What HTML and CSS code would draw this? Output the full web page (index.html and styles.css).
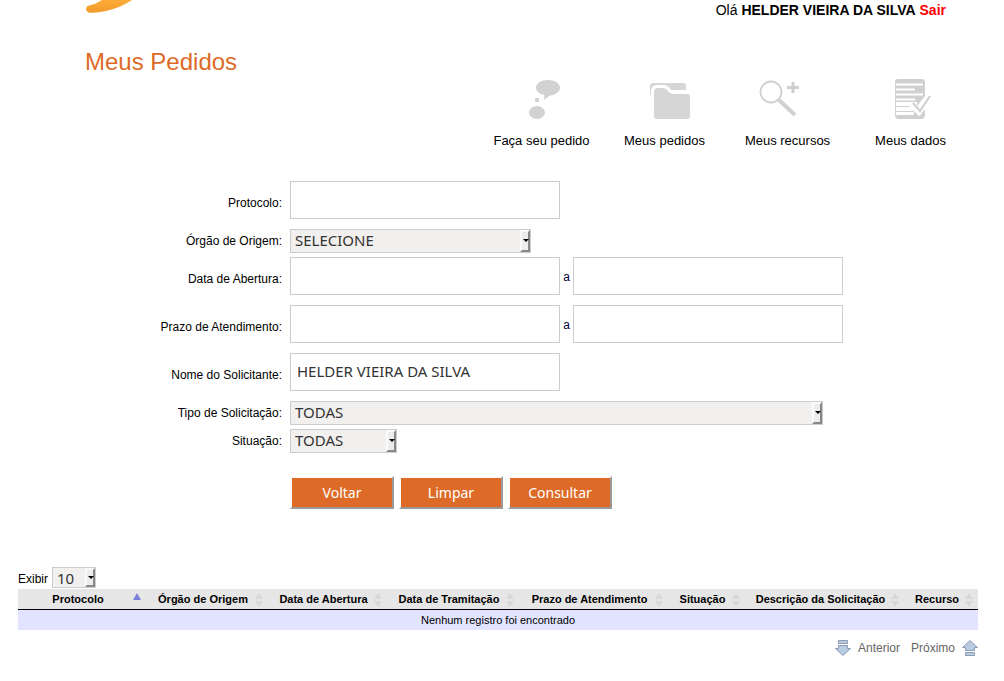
FILE: index.html
```html
<!DOCTYPE html>
<html lang="pt-BR">
<head>
    <meta charset="UTF-8">
    <meta name="viewport" content="width=device-width, initial-scale=1.0">
    <title>Meus Pedidos</title>
    <link rel="stylesheet" href="styles.css">
</head>
<body>
    <header class="topo">
        <svg class="logo" width="48" height="14" viewBox="0 0 48 14" aria-hidden="true">
            <defs>
                <linearGradient id="laranja" x1="0" y1="0" x2="0" y2="1">
                    <stop offset="0" stop-color="#fbab38"/>
                    <stop offset="1" stop-color="#f39a2b"/>
                </linearGradient>
            </defs>
            <path d="M17 0C12 3 8 5 4 5.500C0 6 0 12.500 5 12.700C19 13 35 8 47 0Z" fill="url(#laranja)"/>
        </svg>
        <div class="usuario">Olá <strong>HELDER VIEIRA DA SILVA</strong> <a href="#">Sair</a></div>
    </header>

    <h1>Meus Pedidos</h1>

    <nav class="menu">
        <a href="#">
            <svg width="44" height="44" viewBox="0 0 44 44" fill="#d2d2d2">
                <path d="M28 4C35 4 40 7 40 12C40 16 35 19 30 19.500L24 24L24.500 19C19 18 16 15 16 12C16 7 21 4 28 4Z"/>
                <rect x="15" y="22" width="4" height="4" rx="1"/>
                <ellipse cx="17" cy="36.500" rx="8" ry="6.500"/>
            </svg>
            <span>Faça seu pedido</span>
        </a>
        <a href="#">
            <svg width="44" height="44" viewBox="0 0 44 44" fill="#d6d6d6">
                <path d="M7 10Q7 7 10 7H40Q43 7 43 10V14H28Q25 9 21 9H14Q9 9 8 14V18L7 20Z"/>
                <path d="M11 16Q11 12 15 12H20Q23 12 25 15Q27 18 30 18H44Q47 18 47 21V40Q47 43 44 43H14Q11 43 11 40Z"/>
            </svg>
            <span>Meus pedidos</span>
        </a>
        <a href="#">
            <svg width="44" height="44" viewBox="0 0 44 44" fill="none" stroke="#d0d0d0">
                <circle cx="5" cy="16" r="10.500" stroke-width="1.800"/>
                <path d="M13 24L29 39" stroke-width="4"/>
                <path d="M27 6V17M21 11.500H33" stroke-width="3"/>
            </svg>
            <span>Meus recursos</span>
        </a>
        <a href="#">
            <svg width="44" height="44" viewBox="0 0 44 44">
                <path d="M8 3H34L36 5V20L28 30L36 34V40L34 43H8L6 40V5Z" fill="#d0d0d0"/>
                <path d="M7 8.500H34M7 13.500H26M7 18.500H34M7 23.500H26" stroke="#fff" stroke-width="2"/>
                <path d="M7 26H28V30H7ZM7 31H24V35H7ZM7 36H25V39H7Z" fill="#fff"/>
                <path d="M22 28L30 36L42 20" fill="none" stroke="#fff" stroke-width="6"/>
                <path d="M24 27L31 35L41 20" fill="none" stroke="#cfcfcf" stroke-width="2"/>
            </svg>
            <span>Meus dados</span>
        </a>
    </nav>

    <main>
        <form class="filtro">
            <div class="linha linha-texto">
                <label for="protocolo">Protocolo:</label>
                <input type="text" id="protocolo" name="protocolo">
            </div>
            <div class="linha">
                <label for="orgao">Órgão de Origem:</label>
                <span class="combo combo-medio">
                    <select id="orgao" name="orgao"><option>SELECIONE</option></select>
                </span>
            </div>
            <div class="linha linha-texto">
                <label for="aberturaDe">Data de Abertura:</label>
                <input type="text" id="aberturaDe" name="aberturaDe">
                <label class="ate" for="aberturaAte">a</label>
                <input type="text" id="aberturaAte" name="aberturaAte">
            </div>
            <div class="linha linha-texto">
                <label for="prazoDe">Prazo de Atendimento:</label>
                <input type="text" id="prazoDe" name="prazoDe">
                <label class="ate" for="prazoAte">a</label>
                <input type="text" id="prazoAte" name="prazoAte">
            </div>
            <div class="linha linha-texto">
                <label for="solicitante">Nome do Solicitante:</label>
                <input type="text" id="solicitante" name="solicitante" value="HELDER VIEIRA DA SILVA">
            </div>
            <div class="linha">
                <label for="tipo">Tipo de Solicitação:</label>
                <span class="combo combo-grande">
                    <select id="tipo" name="tipo"><option>TODAS</option></select>
                </span>
            </div>
            <div class="linha">
                <label for="situacao">Situação:</label>
                <span class="combo combo-pequeno">
                    <select id="situacao" name="situacao"><option>TODAS</option></select>
                </span>
            </div>
            <div class="botoes">
                <button type="button">Voltar</button>
                <button type="reset">Limpar</button>
                <button type="button">Consultar</button>
            </div>
        </form>

        <section class="resultado">
            <div class="exibir">
                <label for="exibir">Exibir</label>
                <span class="combo">
                    <select id="exibir" name="exibir"><option>10</option><option>25</option><option>50</option></select>
                </span>
            </div>

            <table>
                <colgroup>
                    <col class="col-protocolo">
                    <col class="col-orgao">
                    <col class="col-abertura">
                    <col class="col-tramitacao">
                    <col class="col-prazo">
                    <col class="col-situacao">
                    <col class="col-descricao">
                    <col class="col-recurso">
                </colgroup>
                <thead>
                    <tr>
                        <th class="crescente">Protocolo</th>
                        <th>Órgão de Origem</th>
                        <th>Data de Abertura</th>
                        <th>Data de Tramitação</th>
                        <th>Prazo de Atendimento</th>
                        <th>Situação</th>
                        <th>Descrição da Solicitação</th>
                        <th>Recurso</th>
                    </tr>
                </thead>
                <tbody>
                    <tr>
                        <td colspan="8">Nenhum registro foi encontrado</td>
                    </tr>
                </tbody>
            </table>

            <div class="paginacao">
                <a href="#">
                    <svg width="16" height="16" viewBox="0 0 16 16" fill="#b9cbe0" stroke="#8c9cb4">
                        <path d="M3.500 0.500H12.500V3.500H3.500Z"/>
                        <path d="M3.500 5.500H12.500V8.500H15.500L8 15.500L0.500 8.500H3.500Z"/>
                    </svg>
                    Anterior
                </a>
                <a href="#">
                    Próximo
                    <svg width="16" height="16" viewBox="0 0 16 16" fill="#b9cbe0" stroke="#8c9cb4">
                        <path d="M8 0.500L15.500 7.500H12.500V10.500H3.500V7.500H0.500Z"/>
                        <path d="M3.500 12.500H12.500V15.500H3.500Z"/>
                    </svg>
                </a>
            </div>
        </section>
    </main>
</body>
</html>
```

FILE: styles.css
```css
* {
    box-sizing: border-box;
}
body {
    margin: 0;
    padding: 0 26px 24px 18px;
    font-family: "Liberation Sans", Arial, sans-serif;
    font-size: 12px;
    color: #000;
    background: #fff;
}
a {
    color: inherit;
    text-decoration: none;
}
.topo {
    display: flex;
    justify-content: space-between;
    align-items: flex-start;
    padding: 0 32px 0 67px;
}
.logo {
    display: block;
}
.usuario {
    font-size: 14px;
    line-height: 20px;
}
.usuario a {
    color: #f00;
    font-weight: bold;
}
h1 {
    margin: 28px 0 0 67px;
    font-size: 24px;
    font-weight: normal;
    line-height: 28px;
    color: #dd6b27;
}

/* menu de ícones */
.menu {
    display: flex;
    justify-content: flex-end;
    padding-right: 6px;
}
.menu a {
    display: flex;
    flex-direction: column;
    align-items: center;
    width: 123px;
    font-size: 13px;
}
.menu svg {
    overflow: visible;
}
.menu span {
    margin-top: 12px;
    line-height: 17px;
}

/* formulário */
.filtro {
    margin-top: 32px;
}
.linha {
    display: flex;
    align-items: center;
    margin-bottom: 4px;
}
.linha-texto {
    margin-bottom: 10px;
}
.linha label:first-child {
    width: 264px;
    margin-right: 8px;
    text-align: right;
}
.linha-texto label:first-child {
    padding-top: 6px;
}
.linha .ate {
    width: 13px;
    padding-top: 2px;
    text-align: center;
    color: #003;
}
input, select, button {
    font-family: "Noto Sans", "Open Sans", sans-serif;
    font-size: 15px;
    color: #333;
}
input {
    width: 270px;
    height: 38px;
    padding: 0 6px 2px;
    border: 1px solid #ccc;
    background: #fff;
}
.combo {
    position: relative;
    display: inline-block;
}
.combo-medio {
    width: 241px;
}
.combo-grande {
    width: 533px;
}
.combo-pequeno {
    width: 107px;
}
select {
    display: block;
    appearance: none;
    width: 100%;
    height: 24px;
    padding: 0 14px 2px 4px;
    border: 1px solid #ccc;
    border-radius: 0;
    background: #f1f0ee;
}
.combo::before {
    content: "";
    position: absolute;
    top: 1px;
    right: 1px;
    bottom: 1px;
    width: 6px;
    border: 2px solid;
    border-color: #fafafa #888 #888 #fafafa;
    background: #edeceb;
    pointer-events: none;
}
.combo::after {
    content: "";
    position: absolute;
    top: calc(50% - 2px);
    right: 2px;
    border: 3px solid transparent;
    border-top: 3px solid #000;
    border-bottom: 0;
    pointer-events: none;
}
.botoes {
    display: flex;
    gap: 5px;
    margin: 23px 0 0 272px;
}
button {
    width: 104px;
    height: 33px;
    padding: 0;
    border: 2px solid;
    border-color: #fafafa #999 #999 #fafafa;
    background: #dd6b27;
    color: #fff;
    font-size: 14px;
    cursor: pointer;
}

/* resultado da consulta */
.resultado {
    margin-top: 58px;
}
.exibir {
    display: flex;
    align-items: center;
    gap: 4px;
    margin-bottom: 1px;
}
.exibir label {
    padding-top: 2px;
}
.exibir .combo {
    width: 44px;
}
.exibir select {
    height: 21px;
}
table {
    width: 100%;
    table-layout: fixed;
    border-collapse: collapse;
    font-size: 11px;
    line-height: 14px;
    text-align: center;
}
.col-protocolo { width: 128px; }
.col-orgao { width: 122px; }
.col-abertura { width: 119px; }
.col-tramitacao { width: 132px; }
.col-prazo { width: 149px; }
.col-situacao { width: 77px; }
.col-descricao { width: 159px; }
.col-recurso { width: 74px; }
th {
    position: relative;
    padding: 3px 18px 3px 10px;
    border-bottom: 1px solid #000;
    background: #e6e6e6;
    white-space: nowrap;
    cursor: pointer;
}
th::before, th::after {
    content: "";
    position: absolute;
    right: 5px;
    border: 4px solid transparent;
}
th::before {
    top: 4px;
    border-top: 0;
    border-bottom: 6px solid #d8d8d8;
}
th::after {
    top: 12px;
    border-bottom: 0;
    border-top: 6px solid #d8d8d8;
}
th.crescente::before {
    border-bottom: 7px solid #7b7fdb;
}
th.crescente::after {
    display: none;
}
td {
    padding: 3px 10px;
    background: #e2e4ff;
}
.paginacao {
    display: flex;
    justify-content: flex-end;
    gap: 11px;
    margin-top: 8px;
    color: #666;
}
.paginacao a {
    display: flex;
    align-items: center;
    gap: 7px;
    line-height: 20px;
}
```
